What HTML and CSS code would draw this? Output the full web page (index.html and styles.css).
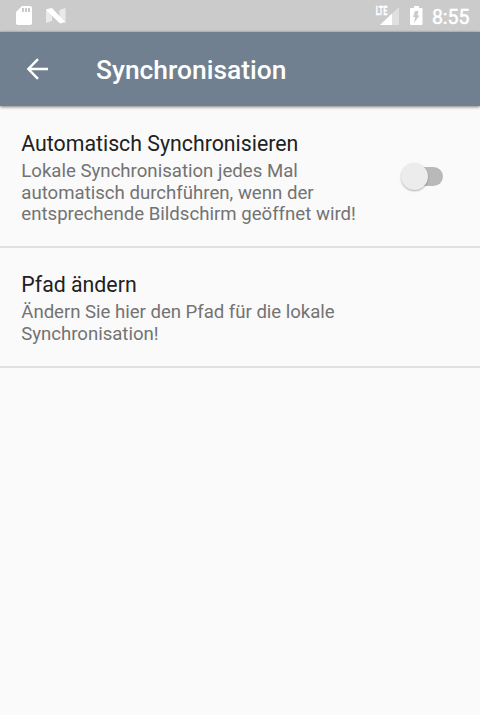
FILE: index.html
```html
<!DOCTYPE html>
<html lang="de">
<head>
<meta charset="utf-8">
<title>Synchronisation</title>
<link rel="stylesheet" href="styles.css">
</head>
<body>
<div class="statusbar">
  <svg class="sd" width="16" height="20" viewBox="0 0 16 20"><path d="M6 0h8a2 2 0 0 1 2 2v15a2 2 0 0 1-2 2H2a2 2 0 0 1-2-2V6z" fill="#fff"/><path d="M6 2h2v4H6zM9 2h2v4H9zM12 2h2v4h-2z" fill="#cbcbcb"/></svg>
  <svg class="nougat" width="20" height="16" viewBox="0 0 20 16"><path d="M0 1l6 2v10l-6 2zM19.500 0v15l-6-2V2z" fill="#fff" opacity=".6"/><path d="M1 1l5-1 13 14-5 1.500L1 3z" fill="#fff"/></svg>
  <span class="lte">LTE</span>
  <svg class="signal" width="20" height="20" viewBox="0 0 20 20"><path d="M19 1v18H0z" fill="#fff" opacity=".4"/><path d="M12 7.600V19H0z" fill="#fff"/></svg>
  <svg class="battery" width="12" height="20" viewBox="0 0 12 20"><path d="M4 0h5v2h2.500a1 1 0 0 1 1 1v15a1 1 0 0 1-1 1H1a1 1 0 0 1-1-1V3a1 1 0 0 1 1-1h3z" fill="#fff"/><path d="M8.500 5L7.500 9.500H9.500L4 17l1-6H3l2-6z" fill="#cbcbcb"/></svg>
  <time class="clock">8:55</time>
</div>
<header class="toolbar">
  <svg class="back" width="32" height="32" viewBox="0 0 32 32"><path d="M27 16H7.500M17 6.200L7.400 16l9.600 9.800" fill="none" stroke="#fff" stroke-width="2.500"/></svg>
  <h1 class="title">Synchronisation</h1>
</header>
<main>
  <section class="row">
    <div class="text"><h2>Automatisch Synchronisieren</h2><p>Lokale Synchronisation jedes Mal<br>automatisch durchführen, wenn der<br>entsprechende Bildschirm geöffnet wird!</p></div>
    <div class="switch"><span class="thumb"></span></div>
  </section>
  <section class="row second">
    <div class="text"><h2>Pfad ändern</h2><p>Ändern Sie hier den Pfad für die lokale<br>Synchronisation!</p></div>
  </section>
</main>
</body>
</html>
```
FILE: styles.css
```css
* { box-sizing: border-box; }
body { margin: 0; height: 715px; background: #fafafa; font-family: Roboto, sans-serif; overflow: hidden; }
h1, h2, p { margin: 0; font-weight: 400; }
svg { display: block; flex: none; }
.statusbar { height: 32px; background: #cbcbcb; border-bottom: 1px solid #c3c3c3; display: flex; align-items: flex-start; padding: 6px 10.500px 0 16px; color: #fff; }
.nougat { margin: 2px 0 0 14px; }
.lte { margin-left: auto; font-size: 12px; line-height: 10px; font-weight: 700; transform: scaleX(.6); transform-origin: right; -webkit-text-stroke: .3px #fff; }
.signal { margin-left: -7.500px; }
.battery { margin-left: 10.500px; overflow: visible; }
.clock { margin-left: 9.500px; font-size: 19.500px; line-height: 23px; font-weight: 400; -webkit-text-stroke: .5px #fff; }
.toolbar { height: 74px; background: #708090; display: flex; align-items: center; padding-left: 21px; color: #fff; box-shadow: 0 1px 3px rgba(0,0,0,.5); }
.title { margin: 2px 0 0 43px; font-size: 26.400px; line-height: 32px; font-weight: 500; }
.row { height: 142px; border-bottom: 2px solid #e0e0e0; padding: 25px 37px 0 21.300px; display: flex; justify-content: space-between; }
.second { height: 120px; padding-top: 24px; }
h2 { font-size: 21.300px; line-height: 26px; color: #212121; white-space: nowrap; }
p { font-size: 18.620px; line-height: 21.700px; color: #737373; white-space: nowrap; margin-top: 4px; }
.second p { letter-spacing: -.03px; }
.switch { width: 38px; height: 19px; border-radius: 10px; background: #b9b9b9; margin-top: 35.500px; position: relative; }
.thumb { position: absolute; left: -4px; top: -4px; width: 27px; height: 27px; border-radius: 50%; background: #ececec; box-shadow: 0 1px 2px rgba(0,0,0,.3); }
```
